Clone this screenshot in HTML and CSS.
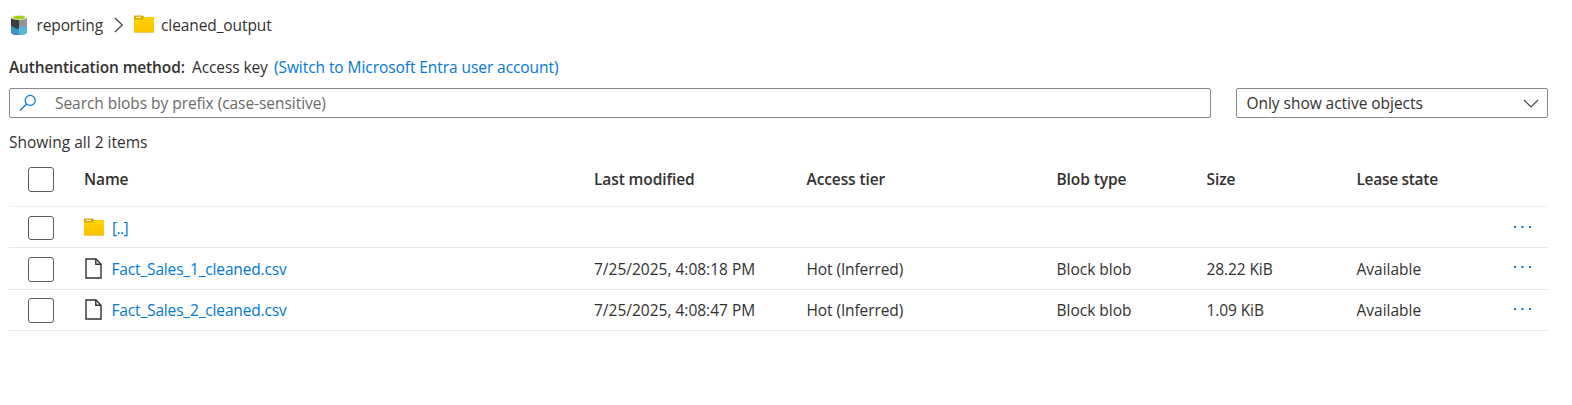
FILE: index.html
```html
<!DOCTYPE html>
<html lang="en">
<head>
<meta charset="utf-8">
<title>cleaned_output</title>
<link rel="stylesheet" href="styles.css">
</head>
<body>
<svg class="defs" width="0" height="0" aria-hidden="true">
  <defs>
    <linearGradient id="gold" x1="0" y1="0" x2="0" y2="1"><stop offset="0" stop-color="#ffd400"/><stop offset="1" stop-color="#ffc000"/></linearGradient>
    <symbol id="folder" viewBox="0 0 20 18">
      <path d="M0 1.2Q0 .4.8.4H8.6L10.4 2H19.2Q20 2 20 2.8V6H0Z" fill="#dfa500"/>
      <path d="M0 4.4H8.4L10.6 2H19.4Q20 2 20 2.6V17.3H0Z" fill="url(#gold)"/>
      <rect x="2" y="1.7" width="5" height="1.3" rx=".4" fill="#fff6d0"/>
      <path d="M0 17.3H20" stroke="#e8b320" stroke-width=".7"/>
    </symbol>
    <symbol id="file" viewBox="0 0 17 21">
      <path d="M1 1H11L16 6.3V20H1Z" fill="#fff" stroke="#323130" stroke-width="1.4"/>
      <path d="M10.8 1V6.2H16" fill="none" stroke="#323130" stroke-width="1.4"/>
    </symbol>
    <symbol id="dots" viewBox="0 0 20 4">
      <path d="M1 1h2v2H1zM8.5 1h2v2h-2zM16 1h2v2h-2z" fill="#0078d4"/>
    </symbol>
  </defs>
</svg>
<nav class="breadcrumb">
  <svg class="container-icon" viewBox="0 0 16 20">
    <path d="M0 2.5V17Q0 20 8 20T16 17V2.5Z" fill="#949494"/>
    <path d="M0 2.5H8V20Q0 20 0 17Z" fill="#3c3c3c"/>
    <path d="M0 11.3Q2 11.3 4 13T8 13V20Q0 20 0 17Z" fill="#3999c6"/>
    <path d="M8 13Q10 10.5 12 11.3T16 11.5V17Q16 20 8 20Z" fill="#5ab4d9"/>
    <ellipse cx="8" cy="2.6" rx="8" ry="2.5" fill="#e4eed5"/>
    <ellipse cx="8" cy="2.5" rx="6" ry="1.8" fill="#a4cf16"/>
  </svg>
  <span class="crumb crumb-root">reporting</span>
  <svg class="crumb-arrow" viewBox="0 0 10 16"><path d="M1 1L8.3 8L1 15" fill="none" stroke="#3b3a39" stroke-width="1.1"/></svg>
  <svg class="crumb-folder"><use href="#folder"/></svg>
  <span class="crumb crumb-current">cleaned_output</span>
</nav>
<div class="auth"><b class="auth-label">Authentication method:</b><span class="auth-value">Access key</span><a class="auth-switch">(Switch to Microsoft Entra user account)</a></div>
<div class="filters">
  <div class="search">
    <svg class="search-icon" viewBox="0 0 18 18"><circle cx="11.2" cy="6.4" r="5" fill="none" stroke="#0078d4" stroke-width="1.2"/><path d="M7.6 10L1 16.5" stroke="#0078d4" stroke-width="1.3"/></svg>
    <span class="search-text">Search blobs by prefix (case-sensitive)</span>
  </div>
  <div class="select"><span class="select-text">Only show active objects</span>
    <svg class="select-arrow" viewBox="0 0 16 9"><path d="M1 1L8 8L15 1" fill="none" stroke="#484644" stroke-width="1.1"/></svg>
  </div>
</div>
<div class="count">Showing all 2 items</div>
<div class="table">
  <div class="row head"><i class="check"></i><span>Name</span><span>Last modified</span><span>Access tier</span><span>Blob type</span><span>Size</span><span class="lease-head">Lease state</span><span></span></div>
  <div class="row row-parent"><i class="check"></i><span class="name"><svg class="folder-icon"><use href="#folder"/></svg><a class="up-link">[..]</a></span><span></span><span></span><span></span><span></span><span></span><svg class="more"><use href="#dots"/></svg></div>
  <div class="row row-first"><i class="check"></i><span class="name"><svg class="file-icon"><use href="#file"/></svg><a class="file-link">Fact_Sales_1_cleaned.csv</a></span><span class="date">7/25/2025, 4:08:18 PM</span><span class="tier">Hot (Inferred)</span><span class="type">Block blob</span><span class="size">28.22 KiB</span><span class="lease">Available</span><svg class="more"><use href="#dots"/></svg></div>
  <div class="row row-second"><i class="check"></i><span class="name"><svg class="file-icon"><use href="#file"/></svg><a class="file-link">Fact_Sales_2_cleaned.csv</a></span><span class="date">7/25/2025, 4:08:47 PM</span><span class="tier">Hot (Inferred)</span><span class="type">Block blob</span><span class="size">1.09 KiB</span><span class="lease">Available</span><svg class="more"><use href="#dots"/></svg></div>
</div>
</body>
</html>
```
FILE: styles.css
```css
* { box-sizing: border-box; }
body { margin: 0; padding: 10px 24px 0 9px; height: 405px; background: #fff; color: #323130; font: 15.5px/20px "Open Sans", "Noto Sans", sans-serif; letter-spacing: -0.1px; overflow: hidden; white-space: nowrap; }
svg { display: block; flex: none; }
.defs { position: absolute; }
a { color: #0078d4; }
.breadcrumb { display: flex; align-items: center; height: 30px; }
.container-icon { width: 16px; height: 20px; margin: -1px 0 0 2px; }
.crumb-root { width: 67px; margin-left: 9.5px; letter-spacing: -0.12px; }
.crumb-arrow { width: 10px; height: 16px; margin-left: 10.5px; }
.crumb-folder { width: 20px; height: 18px; margin: -2px 0 0 10px; }
.crumb-current { margin-left: 7px; }
.auth { display: flex; height: 20px; margin-top: 17px; }
.auth-label { width: 183px; font-weight: 600; letter-spacing: -0.14px; }
.auth-value { width: 82px; }
.auth-switch { letter-spacing: -0.07px; }
.filters { display: flex; gap: 25px; height: 30px; margin-top: 11px; }
.search, .select { display: flex; align-items: center; border: 1px solid #8a8886; border-radius: 2px; }
.search { width: 1202px; padding-left: 9px; color: #6b6967; }
.search-icon { width: 18px; height: 18px; }
.search-text { margin-left: 18px; letter-spacing: -0.05px; }
.select { width: 312px; padding: 0 8.5px 0 9.5px; justify-content: space-between; }
.select-text { letter-spacing: -0.04px; }
.select-arrow { width: 16px; height: 9px; }
.count { margin-top: 14px; height: 20px; letter-spacing: 0; }
.table { margin-top: 7px; }
.row { display: grid; grid-template-columns: 75px 510px 212.5px 250px 150px 150px 156.5px 35px; align-items: center; height: 41px; border-bottom: 1px solid #e8e7e6; }
.head { height: 48px; font-weight: 600; padding-bottom: 7px; border-color: #f0efee; }
.row-first { height: 42px; }
.check { width: 26px; height: 25px; margin-left: 19px; border: 1px solid #605e5c; border-radius: 3px; }
.row-parent .check { height: 24px; margin-top: 1px; }
.row-first .check { margin-top: 1px; }
.name { display: flex; align-items: center; }
.folder-icon { width: 20px; height: 18px; margin-top: -1px; }
.file-icon { width: 17px; height: 21px; margin: -1px 0 0 1px; }
.up-link { margin: 2px 0 0 8px; letter-spacing: -0.6px; }
.file-link { margin: 1px 0 0 9.5px; letter-spacing: -0.16px; }
.row-second .file-link { margin-top: 0; }
.lease-head { letter-spacing: -0.3px; }
.date { letter-spacing: 0; }
.type, .lease { letter-spacing: 0; }
.more { width: 20px; height: 4px; }
.row-first .more, .row-second .more { margin-bottom: 3px; }
```
